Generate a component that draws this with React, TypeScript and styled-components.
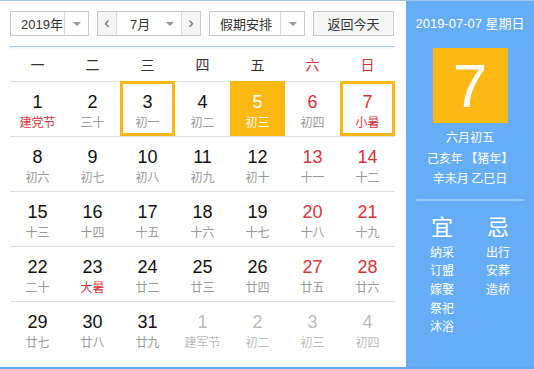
import React from "react";
import styled, { createGlobalStyle } from "styled-components";

const Global = createGlobalStyle`
  html, body { margin: 0; padding: 0; background: #fff; }
  body { font-family: "Liberation Sans", "Noto Sans CJK SC", Arial, sans-serif; }
`;

const RED = "#d8333b";
const YELLOW = "#fdb813";
const BLUE = "#66adf7";

const Frame = styled.div`
  width: 534px;
  height: 369px;
  box-sizing: border-box;
  display: flex;
  border-top: 1px solid #9cc6ee;
  border-bottom: 2px solid #5ea8f2;
`;

const Left = styled.div`
  width: 406px;
  box-sizing: border-box;
  padding: 10px 11px 0 10px;
  display: flex;
  flex-direction: column;
`;

const Toolbar = styled.div`
  display: flex;
  gap: 8px;
  height: 25px;
  margin-bottom: 10px;
`;

const Box = styled.div<{ $w: number }>`
  width: ${(p) => p.$w}px;
  height: 25px;
  box-sizing: border-box;
  border: 1px solid #cacaca;
  display: flex;
  align-items: stretch;
  background: #fff;
  color: #333;
  font-size: 13px;
  font-family: "Liberation Sans", "Noto Sans CJK SC", sans-serif;
`;

const Label = styled.div<{ $pl: number }>`
  flex: 1;
  display: flex;
  align-items: center;
  padding-left: ${(p) => p.$pl}px;
  white-space: nowrap;
  overflow: hidden;
`;

const Arrow = styled.div<{ $divider?: boolean }>`
  width: 23px;
  display: flex;
  align-items: center;
  justify-content: center;
  border-left: ${(p) => (p.$divider ? "1px solid #d8d8d8" : "none")};
  &::after {
    content: "";
    border-left: 4px solid transparent;
    border-right: 4px solid transparent;
    border-top: 4px solid #999;
  }
`;

const NavBtn = styled.div<{ $side: "l" | "r" }>`
  width: 19px;
  display: flex;
  align-items: center;
  justify-content: center;
  background: #f5f5f5;
  ${(p) => (p.$side === "l" ? "border-right: 1px solid #d8d8d8;" : "border-left: 1px solid #d8d8d8;")}
  color: #666;
  font-size: 16px;
  padding-bottom: 2px;
  box-sizing: border-box;
`;

const TodayBtn = styled.div`
  width: 81px;
  height: 25px;
  box-sizing: border-box;
  border: 1px solid #cacaca;
  background: #f6f6f6;
  color: #333;
  font-size: 13px;
  display: flex;
  align-items: center;
  justify-content: center;
  font-family: "Noto Sans CJK SC", sans-serif;
`;

const HolidayText = styled.span`
  font-family: "Noto Sans CJK SC", sans-serif;
  font-size: 13px;
`;

const Rule = styled.div`
  height: 1px;
  background: #a9cdef;
  box-shadow: 0 1px 2px rgba(140, 190, 235, 0.35);
`;

const Grid = styled.div`
  display: grid;
  grid-template-columns: repeat(7, 55px);
`;

const WeekHead = styled.div<{ $red?: boolean }>`
  height: 34px;
  display: flex;
  align-items: center;
  justify-content: center;
  font-size: 14px;
  color: ${(p) => (p.$red ? RED : "#333")};
  font-family: "Noto Sans CJK SC", sans-serif;
  border-bottom: 1px solid #dedede;
`;

type Kind = "normal" | "red" | "other";

const Cell = styled.div<{ $last: boolean }>`
  height: 55px;
  box-sizing: border-box;
  border-bottom: ${(p) => (p.$last ? "none" : "1px solid #dedede")};
  display: flex;
  align-items: stretch;
  justify-content: center;
`;

const Inner = styled.div<{ $mode: "none" | "ring" | "fill" }>`
  flex: 1;
  box-sizing: border-box;
  display: flex;
  flex-direction: column;
  align-items: center;
  margin: ${(p) => (p.$mode === "none" ? "0" : "-1px 0 0 0")};
  border: ${(p) => (p.$mode === "ring" ? `3px solid ${YELLOW}` : "none")};
  background: ${(p) => (p.$mode === "fill" ? YELLOW : "transparent")};
  padding-top: ${(p) => (p.$mode === "ring" ? 8 : p.$mode === "fill" ? 11 : 10)}px;
`;

const Num = styled.div<{ $c: string }>`
  font-size: 18px;
  line-height: 20px;
  color: ${(p) => p.$c};
  font-family: "Liberation Sans", Arial, sans-serif;
`;

const Lunar = styled.div<{ $c: string }>`
  font-size: 12px;
  line-height: 18px;
  margin-top: 1px;
  color: ${(p) => p.$c};
  font-family: "Noto Sans CJK SC", sans-serif;
`;

const Right = styled.div`
  flex: 1;
  background: ${BLUE};
  color: #fff;
  display: flex;
  flex-direction: column;
  align-items: center;
  font-family: "Noto Sans CJK SC", sans-serif;
`;

const DateLine = styled.div`
  margin-top: 14px;
  font-size: 13px;
  line-height: 18px;
  font-family: "Liberation Sans", "Noto Sans CJK SC", sans-serif;
`;

const BigDay = styled.div`
  margin-top: 15px;
  width: 75px;
  height: 75px;
  background: ${YELLOW};
  display: flex;
  align-items: center;
  justify-content: center;
  font-size: 62px;
  line-height: 1;
  font-family: "Liberation Sans", Arial, sans-serif;
`;

const InfoLines = styled.div`
  margin-top: 4px;
  font-size: 12px;
  line-height: 20.5px;
  text-align: center;
`;

const Divider = styled.div`
  margin-top: 10px;
  width: 108px;
  height: 2px;
  background: rgba(255, 255, 255, 0.35);
`;

const Columns = styled.div`
  margin-top: 9px;
  display: flex;
  gap: 32px;
`;

const Col = styled.div`
  display: flex;
  flex-direction: column;
  align-items: center;
`;

const ColHead = styled.div`
  font-size: 22px;
  line-height: 30px;
  margin-bottom: 3px;
`;

const Item = styled.div`
  font-size: 12px;
  line-height: 18.7px;
`;

type Day = { n: number; l: string; kind: Kind; lred?: boolean; mode?: "ring" | "fill" };

const days: Day[] = [
  { n: 1, l: "建党节", kind: "normal", lred: true },
  { n: 2, l: "三十", kind: "normal" },
  { n: 3, l: "初一", kind: "normal", mode: "ring" },
  { n: 4, l: "初二", kind: "normal" },
  { n: 5, l: "初三", kind: "normal", mode: "fill" },
  { n: 6, l: "初四", kind: "red" },
  { n: 7, l: "小暑", kind: "red", lred: true, mode: "ring" },
  { n: 8, l: "初六", kind: "normal" },
  { n: 9, l: "初七", kind: "normal" },
  { n: 10, l: "初八", kind: "normal" },
  { n: 11, l: "初九", kind: "normal" },
  { n: 12, l: "初十", kind: "normal" },
  { n: 13, l: "十一", kind: "red" },
  { n: 14, l: "十二", kind: "red" },
  { n: 15, l: "十三", kind: "normal" },
  { n: 16, l: "十四", kind: "normal" },
  { n: 17, l: "十五", kind: "normal" },
  { n: 18, l: "十六", kind: "normal" },
  { n: 19, l: "十七", kind: "normal" },
  { n: 20, l: "十八", kind: "red" },
  { n: 21, l: "十九", kind: "red" },
  { n: 22, l: "二十", kind: "normal" },
  { n: 23, l: "大暑", kind: "normal", lred: true },
  { n: 24, l: "廿二", kind: "normal" },
  { n: 25, l: "廿三", kind: "normal" },
  { n: 26, l: "廿四", kind: "normal" },
  { n: 27, l: "廿五", kind: "red" },
  { n: 28, l: "廿六", kind: "red" },
  { n: 29, l: "廿七", kind: "normal" },
  { n: 30, l: "廿八", kind: "normal" },
  { n: 31, l: "廿九", kind: "normal" },
  { n: 1, l: "建军节", kind: "other" },
  { n: 2, l: "初二", kind: "other" },
  { n: 3, l: "初三", kind: "other" },
  { n: 4, l: "初四", kind: "other" },
];

const weeks = ["一", "二", "三", "四", "五", "六", "日"];

function colors(d: Day) {
  if (d.mode === "fill") return { n: "#fff", l: "#fff" };
  if (d.kind === "other") return { n: "#bbb", l: "#bbb" };
  const n = d.kind === "red" ? RED : "#111";
  const l = d.lred ? RED : "#999";
  return { n, l };
}

export default function App() {
  return (
    <>
      <Global />
      <Frame>
        <Left>
          <Toolbar>
            <Box $w={79}>
              <Label $pl={10}>2019年</Label>
              <Arrow $divider />
            </Box>
            <Box $w={104}>
              <NavBtn $side="l">&lsaquo;</NavBtn>
              <Label $pl={13}>7月</Label>
              <Arrow />
              <NavBtn $side="r">&rsaquo;</NavBtn>
            </Box>
            <Box $w={96}>
              <Label $pl={10}>
                <HolidayText>假期安排</HolidayText>
              </Label>
              <Arrow $divider />
            </Box>
            <TodayBtn>返回今天</TodayBtn>
          </Toolbar>
          <Rule />
          <Grid>
            {weeks.map((w, i) => (
              <WeekHead key={w} $red={i >= 5}>
                {w}
              </WeekHead>
            ))}
            {days.map((d, i) => {
              const c = colors(d);
              return (
                <Cell key={i} $last={i >= 28}>
                  <Inner $mode={d.mode ?? "none"}>
                    <Num $c={c.n}>{d.n}</Num>
                    <Lunar $c={c.l}>{d.l}</Lunar>
                  </Inner>
                </Cell>
              );
            })}
          </Grid>
        </Left>
        <Right>
          <DateLine>2019-07-07 星期日</DateLine>
          <BigDay>7</BigDay>
          <InfoLines>
            <div>六月初五</div>
            <div>己亥年 【猪年】</div>
            <div>辛未月 乙巳日</div>
          </InfoLines>
          <Divider />
          <Columns>
            <Col>
              <ColHead>宜</ColHead>
              {["纳采", "订盟", "嫁娶", "祭祀", "沐浴"].map((t) => (
                <Item key={t}>{t}</Item>
              ))}
            </Col>
            <Col>
              <ColHead>忌</ColHead>
              {["出行", "安葬", "造桥"].map((t) => (
                <Item key={t}>{t}</Item>
              ))}
            </Col>
          </Columns>
        </Right>
      </Frame>
    </>
  );
}
